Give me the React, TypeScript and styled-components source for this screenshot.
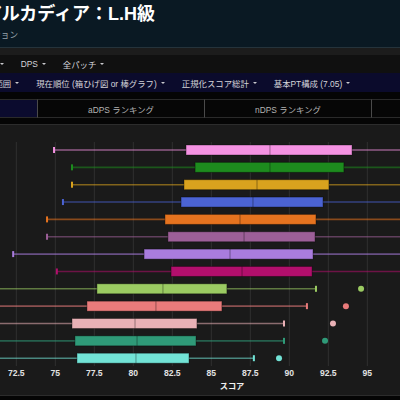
import styled, { createGlobalStyle } from 'styled-components';

const GlobalStyle = createGlobalStyle`
  html, body {
    margin: 0;
    padding: 0;
    background: #050505;
    overflow: hidden;
  }
  body {
    font-family: "Liberation Sans", "Noto Sans CJK JP", sans-serif;
  }
`;

const Page = styled.div`
  width: 400px;
  height: 400px;
  overflow: hidden;
  background: #050505;
`;

const Header = styled.header`
  height: 47px;
  background: #0a1923;
  display: flex;
  justify-content: space-between;
  align-items: flex-start;
  overflow: hidden;
  white-space: nowrap;
`;

const TitleBlock = styled.div`
  padding-top: 3px;
`;

const Title = styled.h1`
  margin: 0 0 0 -16px;
  font-size: 18px;
  line-height: 22px;
  font-weight: 700;
  color: #ffffff;
`;

const Subtitle = styled.div`
  margin: 4px 0 0 -25px;
  font-size: 8.6px;
  line-height: 12px;
  color: #96a3aa;
`;

const UserLink = styled.span`
  margin: 17px -58px 0 0;
  font-size: 10px;
  color: #ffffff;
`;

const Band = styled.div`
  height: 7px;
  border-top: 1px solid #25333b;
  background: #1c1c1c;
`;

const NavBar = styled.nav<{ $tone: string; $shift: number; $height: number }>`
  display: flex;
  align-items: center;
  height: ${({ $height }) => $height}px;
  background: ${({ $tone }) => $tone};
  white-space: nowrap;
  overflow: hidden;

  > :first-child {
    margin-left: ${({ $shift }) => $shift}px;
  }
`;

const NavItem = styled.span`
  display: inline-flex;
  align-items: center;
  flex-shrink: 0;
  padding: 0 8.5px;
  font-size: 8.4px;
  color: #d4d4da;
`;

const Caret = styled.span`
  margin-left: 4px;
  width: 0;
  height: 0;
  border-left: 2px solid transparent;
  border-right: 2px solid transparent;
  border-top: 2.5px solid #c8c8cc;
`;

const TabRow = styled.div`
  display: grid;
  grid-template-columns: repeat(4, 167px);
  margin: 7px 0 0 -130px;
  height: 19px;
`;

const Tab = styled.div<{ $active?: boolean }>`
  display: flex;
  align-items: center;
  justify-content: center;
  border-left: 1px solid #4a4a4a;
  border-top: 1px solid #2a2a2a;
  border-bottom: 1px solid #2a2a2a;
  background: ${({ $active }) => ($active ? '#0b0b2e' : '#060606')};
  font-size: 8.4px;
  color: #b4b4b4;
  white-space: nowrap;
`;

const ChartPanel = styled.section`
  margin-top: 6px;
  height: 270px;
  border-top: 1px solid #2c2c2c;
  border-bottom: 1px solid #2c2c2c;
  background: #1a1a1a;

  svg {
    display: block;
  }
`;

type Row = {
  color: string;
  lo: number;
  q1: number;
  med: number;
  q3: number;
  hi: number;
  out?: number;
};

const rows: Row[] = [
  { color: '#f492e2', lo: 74.92, q1: 83.38, med: 88.76, q3: 94.02, hi: 99.5 },
  { color: '#1d8b1e', lo: 76.07, q1: 83.96, med: 88.76, q3: 93.5, hi: 99.8 },
  { color: '#d9a21e', lo: 76.07, q1: 83.25, med: 87.93, q3: 92.54, hi: 99.2 },
  { color: '#4b63d3', lo: 75.49, q1: 83.06, med: 87.67, q3: 92.16, hi: 99.1 },
  { color: '#e5731f', lo: 74.47, q1: 82.03, med: 86.84, q3: 91.71, hi: 99.4 },
  { color: '#9c5f98', lo: 74.47, q1: 82.22, med: 87.1, q3: 91.65, hi: 99.0 },
  { color: '#a97cde', lo: 72.3, q1: 80.69, med: 86.2, q3: 91.52, hi: 99.3 },
  { color: '#b20f6c', lo: 75.1, q1: 82.42, med: 86.97, q3: 91.46, hi: 99.0 },
  { color: '#9bcb62', lo: 69, q1: 77.67, med: 81.9, q3: 86.0, hi: 91.71, out: 94.6 },
  { color: '#e97b7b', lo: 69, q1: 77.03, med: 81.45, q3: 85.68, hi: 91.13, out: 93.63 },
  { color: '#e9b1b6', lo: 69, q1: 76.07, med: 80.11, q3: 84.08, hi: 89.66, out: 92.8 },
  { color: '#2f9a78', lo: 69, q1: 76.26, med: 80.24, q3: 84.02, hi: 89.66, out: 92.29 },
  { color: '#72e3d6', lo: 69, q1: 76.39, med: 80.17, q3: 83.57, hi: 87.73, out: 89.34 },
];

const ticks = [72.5, 75, 77.5, 80, 82.5, 85, 87.5, 90, 92.5, 95];

// 2.5 points of score = 39px
const sx = (v: number) => 133.3 + (v - 80) * 15.6;
const rowY = (i: number) => 25 + i * 17.35;

const BoxPlot = () => (
  <svg width={400} height={270} viewBox="0 0 400 270">
    {ticks.map((t) => (
      <line key={t} x1={sx(t)} x2={sx(t)} y1={17} y2={241} stroke="#303030" strokeWidth={1} />
    ))}
    {rows.map((r, i) => {
      const cy = rowY(i);
      return (
        <g key={i}>
          <line x1={sx(r.lo)} x2={sx(r.q1)} y1={cy} y2={cy} stroke={r.color} strokeOpacity={0.55} strokeWidth={1.6} />
          <line x1={sx(r.q3)} x2={sx(r.hi)} y1={cy} y2={cy} stroke={r.color} strokeOpacity={0.55} strokeWidth={1.6} />
          {sx(r.lo) > 0 && <rect x={sx(r.lo) - 1} y={cy - 3} width={2} height={6} fill={r.color} />}
          {sx(r.hi) < 400 && <rect x={sx(r.hi) - 1} y={cy - 3} width={2} height={6} fill={r.color} />}
          <rect
            x={sx(r.q1)}
            y={cy - 5}
            width={sx(r.q3) - sx(r.q1)}
            height={10}
            fill={r.color}
            stroke="rgba(0,0,0,0.35)"
            strokeWidth={1}
          />
          <line x1={sx(r.med)} x2={sx(r.med)} y1={cy - 5} y2={cy + 5} stroke="rgba(0,0,0,0.3)" strokeWidth={1.2} />
          {r.out !== undefined && <circle cx={sx(r.out)} cy={cy} r={3} fill={r.color} />}
        </g>
      );
    })}
    {ticks.map((t) => (
      <text
        key={`l${t}`}
        x={sx(t)}
        y={251}
        textAnchor="middle"
        fontSize={8.6}
        fontWeight={700}
        fill="#e2e2e2"
        fontFamily='"Liberation Sans", sans-serif'
      >
        {t}
      </text>
    ))}
    <text
      x={232}
      y={264}
      textAnchor="middle"
      fontSize={8.2}
      fontWeight={700}
      fill="#f0f0f0"
      fontFamily='"Noto Sans CJK JP", sans-serif'
    >
      スコア
    </text>
  </svg>
);

export default function App() {
  return (
    <Page>
      <GlobalStyle />
      <Header>
        <TitleBlock>
          <Title>アルカディア：L.H級</Title>
          <Subtitle>セクション</Subtitle>
        </TitleBlock>
        <UserLink>ユーザー</UserLink>
      </Header>
      <Band />
      <NavBar $tone="#101010" $shift={-38} $height={18}>
        <NavItem>
          ジョブ<Caret />
        </NavItem>
        <NavItem>
          DPS<Caret />
        </NavItem>
        <NavItem>
          全パッチ<Caret />
        </NavItem>
      </NavBar>
      <NavBar $tone="#0b0b2c" $shift={-14} $height={19}>
        <NavItem>
          範囲<Caret />
        </NavItem>
        <NavItem>
          現在順位 (箱ひげ図 or 棒グラフ)<Caret />
        </NavItem>
        <NavItem>
          正規化スコア総計<Caret />
        </NavItem>
        <NavItem>
          基本PT構成 (7.05)<Caret />
        </NavItem>
      </NavBar>
      <TabRow>
        <Tab $active>総合ランキング</Tab>
        <Tab>aDPS ランキング</Tab>
        <Tab>nDPS ランキング</Tab>
        <Tab>ジョブ別</Tab>
      </TabRow>
      <ChartPanel>
        <BoxPlot />
      </ChartPanel>
    </Page>
  );
}
